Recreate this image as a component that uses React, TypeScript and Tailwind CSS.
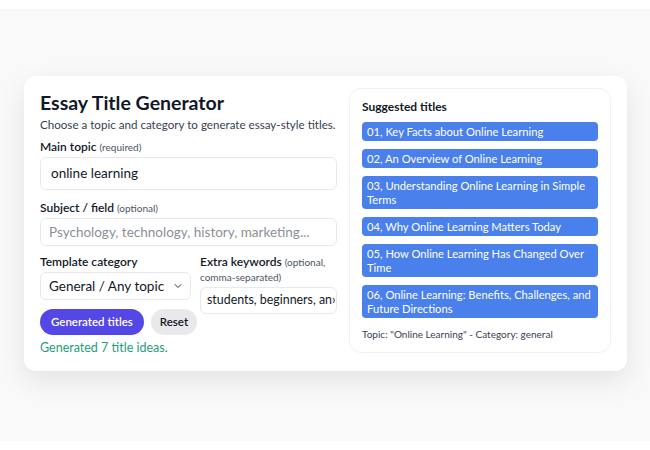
import { ChevronDown } from "lucide-react";

const titles = [
  "01, Key Facts about Online Learning",
  "02, An Overview of Online Learning",
  "03, Understanding Online Learning in Simple Terms",
  "04, Why Online Learning Matters Today",
  "05, How Online Learning Has Changed Over Time",
  "06, Online Learning: Benefits, Challenges, and Future Directions",
];

export default function App() {
  return (
    <div className="w-[650px] h-[450px] bg-white pt-[9px] font-['Lato','Noto_Sans',sans-serif] text-[#111827] overflow-hidden">
      <div className="h-[432px] bg-[#f9f9fa] pt-[67px] px-6">
        <div className="w-[603px] h-[295px] rounded-xl bg-white shadow-[0_10px_28px_rgba(0,0,0,0.09)] flex gap-3 pt-3 px-4">
          {/* Left: form */}
          <div className="w-[297px] flex flex-col">
            <h1 className="text-[19.5px] leading-[24px] font-bold mt-[3px]">Essay Title Generator</h1>
            <p className="text-[11.6px] leading-[16px] text-[#374151] mt-[2px] whitespace-nowrap">
              Choose a topic and category to generate essay-style titles.
            </p>

            <label className="text-[12px] leading-[16px] font-semibold mt-[6px]">
              Main topic <span className="text-[10px] font-normal text-[#4b5563]">(required)</span>
            </label>
            <div className="mt-[2px] h-[33px] rounded-md border border-[#e8e9ec] px-[10px] flex items-center text-[13.5px]">
              online learning
            </div>

            <label className="text-[12px] leading-[16px] font-semibold mt-[10px]">
              Subject / field <span className="text-[10px] font-normal text-[#4b5563]">(optional)</span>
            </label>
            <div className="mt-[2px] h-[28px] rounded-md border border-[#e8e9ec] px-[8px] flex items-center text-[13.5px] text-[#8b8f97] whitespace-nowrap overflow-hidden">
              Psychology, technology, history, marketing...
            </div>

            <div className="flex gap-[9px] mt-[8px]">
              <div className="w-[151px] shrink-0 flex flex-col">
                <label className="text-[12px] leading-[16px] font-semibold">Template category</label>
                <div className="mt-[2px] h-[28px] rounded-md border border-[#e8e9ec] pl-[8px] pr-[6px] flex items-center justify-between text-[13.5px] whitespace-nowrap">
                  <span>General / Any topic</span>
                  <ChevronDown size={12} strokeWidth={2} className="text-[#333]" />
                </div>
                <div className="flex gap-[7px] mt-[9px] w-max">
                  <button className="h-[26px] px-[11px] rounded-full bg-[#5546e6] text-white text-[11.5px] font-semibold whitespace-nowrap">
                    Generated titles
                  </button>
                  <button className="h-[26px] px-[9px] rounded-full bg-[#e9e9eb] text-[11.5px] font-semibold">
                    Reset
                  </button>
                </div>
              </div>
              <div className="flex-1 min-w-0 flex flex-col">
                <div className="text-[12px] leading-[15px] font-semibold">
                  Extra keywords <span className="text-[10px] font-normal text-[#4b5563]">(optional,</span>
                </div>
                <div className="text-[10px] leading-[15px] text-[#4b5563]">comma-separated)</div>
                <div className="mt-[2px] h-[27px] rounded-md border border-[#e8e9ec] px-[6px] flex items-center text-[12.4px] whitespace-nowrap overflow-hidden">
                  students, beginners, an›
                </div>
              </div>
            </div>

            <p className="text-[12.5px] leading-[16px] text-[#1f9d7a] mt-[5px]">Generated 7 title ideas.</p>
          </div>

          {/* Right: results */}
          <div className="w-[263px] h-[265px] rounded-xl border border-[#eef0f2] px-3 pt-[10px] flex flex-col">
            <h2 className="text-[12px] leading-[16px] font-bold">Suggested titles</h2>
            <div className="flex flex-col gap-2 mt-[7px]">
              {titles.map((t) => (
                <div
                  key={t}
                  className="rounded-[4px] bg-[#4a80eb] text-white text-[11.2px] leading-[14px] px-[5px] py-[2.5px]"
                >
                  {t}
                </div>
              ))}
            </div>
            <p className="text-[10px] leading-[14px] text-[#374151] mt-[9px]">
              Topic: "Online Learning" - Category: general
            </p>
          </div>
        </div>
      </div>
    </div>
  );
}
